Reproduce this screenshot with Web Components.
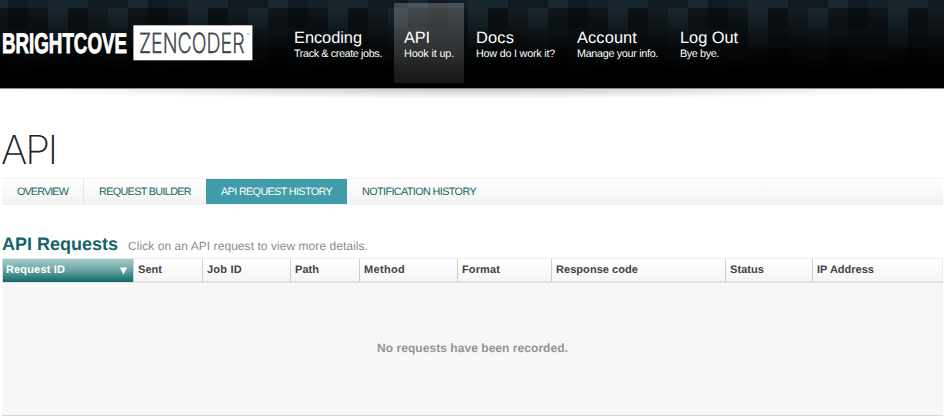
<!DOCTYPE html>
<html lang="en">
<head>
<meta charset="utf-8">
<title>API Requests</title>
<style>
html,body{margin:0;height:416px;overflow:hidden;background:#fff}
body{font-family:"Liberation Sans",Arial,sans-serif;text-rendering:geometricPrecision}
</style>
</head>
<body>
<api-page></api-page>
<script>
const define = (name, html, ready) => customElements.define(name, class extends HTMLElement {
  connectedCallback() {
    if (this.shadowRoot) return;
    const t = document.createElement('template');
    t.innerHTML = html;
    this.attachShadow({mode: 'open'}).append(t.content.cloneNode(true));
    if (ready) ready(this, this.shadowRoot);
  }
});

// Text tracked so that the run takes up the width given in the "w" attribute.
define('fit-label', `<style>:host{display:block;white-space:nowrap}span{display:inline-block}</style><span><slot></slot></span>`, (el, root) => {
  const w = +el.getAttribute('w'), s = root.querySelector('span');
  const n = s.getBoundingClientRect().width, c = el.textContent.length;
  if (n) s.style.letterSpacing = ((w - n) / c) + 'px';
  el.style.width = w + 'px';
});

define('brand-logo', `<style>:host{display:block;width:254px;height:88px}svg{display:block}</style>
<svg width="254" height="88">
  <text data-x="2" data-w="125" y="53" font-family="Liberation Sans Narrow, Liberation Sans" font-weight="700" font-size="28.5" fill="#fff" stroke="#fff" stroke-width=".9">BRIGHTCOVE</text>
  <rect x="133.4" y="25.3" width="119" height="35" fill="#fff"/>
  <text data-x="139" data-w="105.5" y="53" font-family="Inter" font-weight="300" font-size="28" fill="#40474c" stroke="#40474c" stroke-width=".3">ZENCODER</text>
  <text x="246" y="36" font-family="Liberation Sans" font-size="4" fill="#777">™</text>
</svg>`, (el, root) => {
  // Condense each wordmark horizontally to its own width.
  root.querySelectorAll('[data-w]').forEach(t => {
    const k = t.dataset.w / t.getComputedTextLength();
    t.setAttribute('transform', `translate(${t.dataset.x} 0) scale(${k} 1)`);
  });
});

define('nav-item', `<style>
:host{display:block;box-sizing:border-box;height:80px;margin-top:3px;padding:26px 10px 0;color:#fff}
:host([active]){background:linear-gradient(rgba(255,255,255,.22),rgba(255,255,255,.17) 60%,rgba(255,255,255,.09))}
.t{font-size:16.4px;line-height:18px}.s{font-size:10.8px;line-height:14px}
</style><div class="t"><slot name="title"></slot></div><div class="s"><slot></slot></div>`);

define('site-header', `<style>
:host{display:block;height:100px}
.bar{height:88px;background:#000;display:grid}
.bar>*{grid-area:1/1}
.row{display:flex}
nav{display:flex;gap:2px;margin-left:30px}
.line{height:1px;background:#8d8d8d}
.shadow{height:11px;background:radial-gradient(ellipse 480px 10px at 50% 0,rgba(0,0,0,.21),rgba(0,0,0,.11) 45%,rgba(0,0,0,0))}
</style>
<div class="bar"><svg width="944" height="88" shape-rendering="crispEdges"><defs>
<pattern id="p" width="140" height="88" patternUnits="userSpaceOnUse" x="48"></pattern>
<linearGradient id="g" gradientUnits="userSpaceOnUse" x1="0" y1="0" x2="0" y2="88"><stop offset=".09" stop-opacity="0"/><stop offset=".55" stop-opacity=".7"/><stop offset=".76" stop-opacity=".95"/><stop offset=".86"/></linearGradient>
</defs><rect width="944" height="88" fill="url(#p)"/><rect width="944" height="88" fill="url(#g)"/></svg>
<div class="row"><brand-logo></brand-logo>
<nav>
<nav-item><fit-label slot="title" w="68">Encoding</fit-label><fit-label w="88">Track &amp; create jobs.</fit-label></nav-item>
<nav-item active><fit-label slot="title" w="26">API</fit-label><fit-label w="50">Hook it up.</fit-label></nav-item>
<nav-item><fit-label slot="title" w="38">Docs</fit-label><fit-label w="79">How do I work it?</fit-label></nav-item>
<nav-item><fit-label slot="title" w="60">Account</fit-label><fit-label w="81">Manage your info.</fit-label></nav-item>
<nav-item><fit-label slot="title" w="58">Log Out</fit-label><fit-label w="39">Bye bye.</fit-label></nav-item>
</nav></div></div>
<div class="line"></div><div class="shadow"></div>`, (el, root) => {
  const rows = [
    [0, 8, '17252d 17252d 101a20 101a20 192830 111a22 13202a'],
    [8, 20, '18272f 0d1316 141d22 18272f 0f1619 0b1013 0f161b'],
    [28, 20, '18262c 10171a 131b1f 152226 131d20 0f171d 0f171d'],
    [48, 20, '12191c 0c1013 12191d 162024 0d1215 12191d 141d23'],
    [68, 20, '080c0e 080c0e 080c0e 060809 060809 12181c 080c0e']];
  root.querySelector('pattern').innerHTML = rows.map(([y, h, c]) => c.split(' ').map((f, i) =>
    `<rect x="${i * 20}" y="${y}" width="20" height="${h}" fill="#${f}"/>`).join('')).join('');
});

define('tab-item', `<style>
:host{display:block;box-sizing:border-box;height:25px;padding:0 15px;font-size:10.8px;line-height:27px;color:#1a6565}
:host([rule]){border-right:1px solid #e6e6e6}
:host([active]){background:#3f9ca8;color:#fff}
</style><slot></slot>`);

define('tab-bar', `<style>:host{display:flex;box-sizing:border-box;height:27px;margin:0 1px 0 2px;border:solid #f0f0f0;border-width:1px 0;background:linear-gradient(#fff,#f2f2f2)}</style><slot></slot>`);

define('column-head', `<style>
:host{display:flex;box-sizing:border-box;justify-content:space-between;padding:0 6px 0 4px;border-left:1px solid #cfcfcf;font-size:11px;font-weight:700;line-height:23px;color:#444}
:host([sorted]){border-left:1px solid #cfe0e0;padding-left:3px;color:#fff;background:linear-gradient(#a3cbc9,#68a3a2 50%,#0c6967)}
svg{display:none;margin-top:8px}:host([sorted]) svg{display:block}
</style><slot></slot><svg width="7" height="8"><path d="M0 0.5H7L3.5 7.5Z" fill="#fff"/></svg>`);

define('request-table', `<style>
:host{display:block;margin:0 1px 0 2px}
.head{display:grid;box-sizing:border-box;height:23px;grid-template-columns:131px 69px 88px 69px 98px 94px 174px 87px 1fr;border-top:1px solid #ededed;border-right:1px solid #ececec;background:linear-gradient(#fff,#f5f5f5)}
.body{box-sizing:border-box;height:135px;border-top:2px solid #e2e2e2;border-bottom:1px solid #d6d6d6;background:#f7f7f7;display:flex;justify-content:center;padding-top:58px;font-size:12px;line-height:14px;font-weight:700;color:#949494}
</style>
<div class="head">
<column-head sorted><fit-label w="59">Request ID</fit-label></column-head>
<column-head><fit-label w="24">Sent</fit-label></column-head>
<column-head><fit-label w="35">Job ID</fit-label></column-head>
<column-head><fit-label w="24">Path</fit-label></column-head>
<column-head><fit-label w="41">Method</fit-label></column-head>
<column-head><fit-label w="38">Format</fit-label></column-head>
<column-head><fit-label w="82">Response code</fit-label></column-head>
<column-head><fit-label w="34">Status</fit-label></column-head>
<column-head><fit-label w="57">IP Address</fit-label></column-head>
</div>
<div class="body"><fit-label w="191">No requests have been recorded.</fit-label></div>`);

define('api-page', `<style>
:host{display:block}
h1{margin:28px 0 0 1px;height:50px;font:250 40px/44px Inter,sans-serif;color:#222}
.title{display:flex;align-items:baseline;gap:10px;margin:28px 0 0 2px;height:25px}
h2{margin:0;font-size:18px;line-height:22px;color:#15636a}
.hint{font-size:12px;color:#8c8c8c}
</style>
<site-header></site-header>
<h1><fit-label w="55">API</fit-label></h1>
<tab-bar>
<tab-item rule><fit-label w="51">OVERVIEW</fit-label></tab-item>
<tab-item><fit-label w="92">REQUEST BUILDER</fit-label></tab-item>
<tab-item active><fit-label w="111">API REQUEST HISTORY</fit-label></tab-item>
<tab-item><fit-label w="114">NOTIFICATION HISTORY</fit-label></tab-item>
</tab-bar>
<div class="title"><h2><fit-label w="116">API Requests</fit-label></h2><fit-label class="hint" w="240">Click on an API request to view more details.</fit-label></div>
<request-table></request-table>`);
</script>
</body>
</html>
